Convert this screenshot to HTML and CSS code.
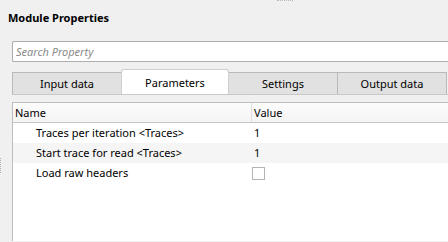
FILE: index.html
```html
<!DOCTYPE html>
<html lang="en">
<head>
    <meta charset="UTF-8">
    <title>Module Properties</title>
    <link rel="stylesheet" href="styles.css">
</head>
<body>
    <div class="top-grip"></div>
    <h1 class="title">Module Properties</h1>

    <div class="body-row">
        <div class="gutter">
            <div class="side-grip"></div>
        </div>

        <div class="content">
            <input class="search" type="text" placeholder="Search Property">

            <div class="tabs">
                <div class="tab">Input data</div>
                <div class="tab active">Parameters</div>
                <div class="tab">Settings</div>
                <div class="tab">Output data</div>
                <div class="tab-rest"></div>
            </div>

            <div class="grid">
                <div class="grid-head">
                    <div class="col-name">Name</div>
                    <div class="col-value">Value</div>
                </div>
                <div class="grid-row">
                    <div class="col-name indent">Traces per iteration &lt;Traces&gt;</div>
                    <div class="col-value">1</div>
                </div>
                <div class="grid-row alt">
                    <div class="col-name indent">Start trace for read &lt;Traces&gt;</div>
                    <div class="col-value">1</div>
                </div>
                <div class="grid-row">
                    <div class="col-name indent">Load raw headers</div>
                    <div class="col-value"><span class="checkbox"></span></div>
                </div>
            </div>
        </div>
    </div>
</body>
</html>
```

FILE: styles.css
```css
html, body {
    margin: 0;
    height: 100%;
    overflow: hidden;
}
body {
    background-color: #f0f0f0;
    color: #000;
    font-family: 'Noto Sans', 'Open Sans', sans-serif;
    font-size: 11px;
}
.top-grip {
    width: 16px;
    height: 0;
    margin-left: 277px;
    border-top: 1px dotted #b8b8b8;
}
.title {
    margin: 9px 0 0 8px;
    height: 16px;
    line-height: 16px;
    font-size: 11px;
    font-weight: bold;
}
.body-row {
    display: flex;
    margin-top: 15px;
    height: 200px;
}
.gutter {
    width: 12px;
    flex-shrink: 0;
    display: flex;
    align-items: flex-start;
}
.side-grip {
    width: 0;
    height: 15px;
    margin-top: 117px;
    border-left: 1px dotted #b0b0b0;
}
.content {
    flex: 1;
    min-width: 0;
    display: flex;
    flex-direction: column;
}
.search {
    box-sizing: border-box;
    height: 21px;
    width: 100%;
    margin: 0;
    padding: 0 3px;
    border: 1px solid #adadad;
    border-right: none;
    border-radius: 2px 0 0 2px;
    background: #fff;
    font-family: inherit;
    font-size: 11px;
    outline: none;
}
.search::placeholder {
    color: #8a8a8a;
    font-style: italic;
}
.tabs {
    display: flex;
    align-items: flex-end;
    height: 25px;
    margin-top: 7px;
    border-bottom: 1px solid #c8c8c8;
}
.tab {
    box-sizing: border-box;
    flex-shrink: 0;
    width: 110px;
    height: 22px;
    line-height: 21px;
    text-align: center;
    background: #e1e1e1;
    border: 1px solid #b9b9b9;
    border-bottom: none;
    margin-right: -1px;
}
.tab.active {
    width: 108px;
    height: 25px;
    line-height: 25px;
    background: #fff;
    border-color: #cfcfcf;
    border-radius: 3px 3px 0 0;
    position: relative;
    z-index: 1;
}
.tab-rest {
    flex: 1;
    height: 22px;
    border-left: 1px solid #b9b9b9;
}
.grid {
    flex: 1;
    margin-top: 7px;
    background: #fff;
    border: 1px solid #bdbdbd;
    border-right: none;
    border-bottom: none;
}
.grid-head, .grid-row {
    display: flex;
    height: 20px;
    line-height: 20px;
}
.grid-head {
    height: 19px;
    line-height: 19px;
    background: linear-gradient(#fcfcfc, #f4f4f4);
    border-bottom: 1px solid #c6c6c6;
}
.grid-row.alt {
    background: #f5f5f5;
}
.col-name {
    width: 236px;
    padding-left: 2px;
    white-space: nowrap;
}
.col-name.indent {
    padding-left: 23px;
    width: 215px;
}
.grid-head .col-value {
    border-left: 1px solid #dedede;
}
.col-value {
    flex: 1;
    padding-left: 2px;
    display: flex;
    align-items: center;
}
.grid-row .col-value {
    padding-left: 3px;
}
.checkbox {
    box-sizing: border-box;
    width: 13px;
    height: 13px;
    margin-left: -2px;
    border: 1px solid #b3b3b3;
    background: #fff;
}
```
